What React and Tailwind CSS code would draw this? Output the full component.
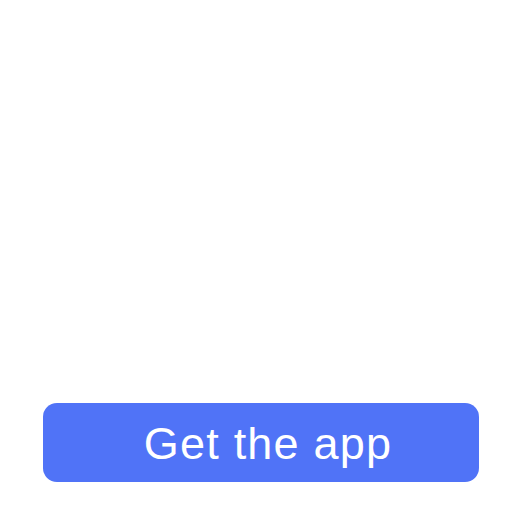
export default function App() {
  return (
    <div className="w-[512px] h-[512px] bg-white flex flex-col justify-end pl-[43px] pr-[33px] pb-[30px]">
      <button
        type="button"
        className="h-[79px] w-full rounded-[14px] bg-[#5073f7] text-white text-[45px] leading-none tracking-[1.2px] pl-[14px] pt-[2px] flex items-center justify-center"
        style={{ fontFamily: '"Liberation Sans", Arial, sans-serif' }}
      >
        Get the app
      </button>
    </div>
  );
}
